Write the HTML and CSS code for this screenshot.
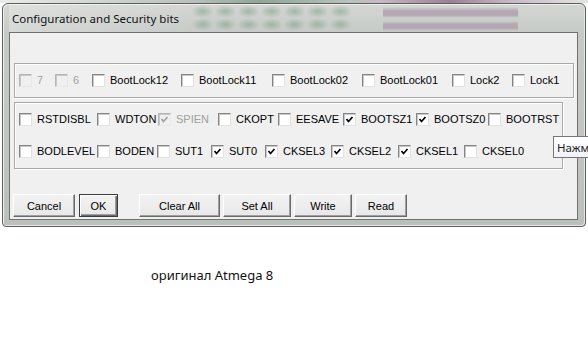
FILE: index.html
```html
<!DOCTYPE html>
<html lang="ru">
<head>
    <meta charset="UTF-8">
    <title>Configuration and Security bits</title>
    <link rel="stylesheet" href="styles.css">
</head>
<body>
    <div class="backdrop"></div>
    <div class="window">
        <div class="titlebar">
            <span class="title">Configuration and Security bits</span>
            <span class="glass-icons"></span>
            <span class="glass-band"></span>
        </div>
        <div class="client">
            <div class="group group-lock">
                <div class="bits-row row-lock">
                    <label class="bit disabled"><span class="box"></span>7</label>
                    <label class="bit disabled"><span class="box"></span>6</label>
                    <label class="bit"><span class="box"></span>BootLock12</label>
                    <label class="bit"><span class="box"></span>BootLock11</label>
                    <label class="bit"><span class="box"></span>BootLock02</label>
                    <label class="bit"><span class="box"></span>BootLock01</label>
                    <label class="bit"><span class="box"></span>Lock2</label>
                    <label class="bit"><span class="box"></span>Lock1</label>
                </div>
            </div>
            <div class="group group-fuse">
                <div class="bits-row row-high">
                    <label class="bit"><span class="box"></span>RSTDISBL</label>
                    <label class="bit"><span class="box"></span>WDTON</label>
                    <label class="bit disabled"><span class="box checked"><svg viewBox="0 0 11 11"><polyline points="2.5,5 4.5,7.5 8.5,3"/></svg></span>SPIEN</label>
                    <label class="bit"><span class="box"></span>CKOPT</label>
                    <label class="bit"><span class="box"></span>EESAVE</label>
                    <label class="bit"><span class="box checked"><svg viewBox="0 0 11 11"><polyline points="2.5,5 4.5,7.5 8.5,3"/></svg></span>BOOTSZ1</label>
                    <label class="bit"><span class="box checked"><svg viewBox="0 0 11 11"><polyline points="2.5,5 4.5,7.5 8.5,3"/></svg></span>BOOTSZ0</label>
                    <label class="bit"><span class="box"></span>BOOTRST</label>
                </div>
                <div class="bits-row row-low">
                    <label class="bit"><span class="box"></span>BODLEVEL</label>
                    <label class="bit"><span class="box"></span>BODEN</label>
                    <label class="bit"><span class="box"></span>SUT1</label>
                    <label class="bit"><span class="box checked"><svg viewBox="0 0 11 11"><polyline points="2.5,5 4.5,7.5 8.5,3"/></svg></span>SUT0</label>
                    <label class="bit"><span class="box checked"><svg viewBox="0 0 11 11"><polyline points="2.5,5 4.5,7.5 8.5,3"/></svg></span>CKSEL3</label>
                    <label class="bit"><span class="box checked"><svg viewBox="0 0 11 11"><polyline points="2.5,5 4.5,7.5 8.5,3"/></svg></span>CKSEL2</label>
                    <label class="bit"><span class="box checked"><svg viewBox="0 0 11 11"><polyline points="2.5,5 4.5,7.5 8.5,3"/></svg></span>CKSEL1</label>
                    <label class="bit"><span class="box"></span>CKSEL0</label>
                </div>
            </div>
            <div class="buttons">
                <button class="btn btn-cancel">Cancel</button>
                <button class="btn btn-ok">OK</button>
                <button class="btn btn-clear">Clear All</button>
                <button class="btn btn-set">Set All</button>
                <button class="btn btn-write">Write</button>
                <button class="btn btn-read">Read</button>
            </div>
        </div>
    </div>
    <div class="tooltip">Нажм</div>
    <p class="caption">оригинал Atmega 8</p>
</body>
</html>
```

FILE: styles.css
```css
body {
    margin: 0;
    background-color: #ffffff;
    font-family: "Liberation Sans", Arial, sans-serif;
    font-size: 11px;
    width: 588px;
    height: 357px;
    overflow: hidden;
    position: relative;
}
.backdrop {
    height: 3px;
    background: linear-gradient(to right, #e9ebe9 0, #b9c2bb 190px, #93a597 260px, #b9c2bb 350px, #c9b8c6 380px, #9d7f97 450px, #c9b8c6 510px, #e4e4e4 588px);
}
.window {
    margin-left: 2px;
    width: 584px;
    height: 224px;
    box-sizing: border-box;
    border: 1px solid #5c5f5c;
    border-radius: 6px 6px 4px 4px;
    padding: 0 7px 6px 6px;
    background: linear-gradient(to bottom, #d3d6d3 0, #c6cac7 30px, #c2c6c3 120px, #bcc0bd 100%);
    box-shadow: inset 1px 1px 0 #eef0ee, inset -1px -1px 0 #e3e6e3;
}
.titlebar {
    height: 28px;
    display: flex;
    align-items: center;
    background: linear-gradient(to right, rgba(255, 255, 255, 0.25), rgba(255, 255, 255, 0) 200px);
}
.title {
    font-family: "Noto Sans", sans-serif;
    font-size: 11.5px;
    color: #111;
    margin-left: 3px;
    white-space: nowrap;
}
.glass-icons {
    margin-left: 12px;
    width: 162px;
    height: 26px;
    background: radial-gradient(closest-side, rgba(95, 140, 105, 0.4), rgba(95, 140, 105, 0.12) 70%, rgba(95, 140, 105, 0)) 0 0 / 23px 13px repeat;
}
.glass-band {
    margin-left: 30px;
    width: 135px;
    height: 26px;
    background: linear-gradient(to bottom, rgba(140, 100, 135, 0) 2px, rgba(140, 100, 135, 0.4) 6px, rgba(140, 100, 135, 0.4) 10px, rgba(140, 100, 135, 0) 13px, rgba(140, 100, 135, 0) 16px, rgba(140, 100, 135, 0.35) 19px, rgba(140, 100, 135, 0.35) 23px, rgba(140, 100, 135, 0) 26px);
}
.client {
    height: 188px;
    box-sizing: border-box;
    border: 1px solid #707070;
    background-color: #f0f0f0;
    padding-top: 30px;
}
.group {
    margin-left: 4px;
    box-sizing: border-box;
    border: 1px solid #a9a9a9;
    box-shadow: 1px 1px 0 #ffffff, inset 1px 1px 0 #ffffff;
    padding: 10px 0 0 4px;
}
.group-lock {
    width: 560px;
    height: 35px;
}
.group-fuse {
    margin-top: 4px;
    width: 549px;
    height: 67px;
    display: flex;
    flex-direction: column;
    gap: 19px;
}
.bits-row {
    display: grid;
    height: 13px;
    align-items: center;
}
.row-lock {
    grid-template-columns: 36px 37px 89px 91px 90px 90px 60px auto;
}
.row-high {
    grid-template-columns: 78px 61px 60px 60px 65px 73px 72px auto;
}
.row-low {
    grid-template-columns: 78px 60px 54px 54px 66px 67px 66px auto;
}
.bit {
    display: flex;
    align-items: center;
    gap: 5px;
    white-space: nowrap;
    color: #000;
    height: 13px;
    line-height: 13px;
}
.bit.disabled {
    color: #a0a0a0;
}
.box {
    flex: none;
    width: 13px;
    height: 13px;
    box-sizing: border-box;
    border: 1px solid;
    border-color: #858585 #e2e2e2 #e2e2e2 #858585;
    box-shadow: inset 1px 1px 0 #c8c8c8;
    background-color: #ffffff;
}
.disabled .box {
    background-color: #f0f0f0;
    border-color: #b5b5b5 #e8e8e8 #e8e8e8 #b5b5b5;
}
.box svg {
    display: block;
    width: 11px;
    height: 11px;
}
.box polyline {
    fill: none;
    stroke: #000;
    stroke-width: 1.7;
}
.disabled .box polyline {
    stroke: #a0a0a0;
}
.buttons {
    display: flex;
    margin: 25px 0 0 3px;
}
.btn {
    height: 23px;
    box-sizing: border-box;
    font-family: "Liberation Sans", Arial, sans-serif;
    font-size: 11px;
    color: #000;
    background: linear-gradient(to bottom, #f2f2f2, #e8e8e8);
    border: 1px solid;
    border-color: #ffffff #6a6a6a #6a6a6a #ffffff;
    box-shadow: inset -1px -1px 0 #a0a0a0;
    padding: 0;
}
.btn-cancel { width: 62px; }
.btn-ok {
    width: 39px;
    margin-left: 4px;
    border-color: #3c3c3c;
    box-shadow: inset 1px 1px 0 #ffffff, inset -1px -1px 0 #6a6a6a, inset -2px -2px 0 #a0a0a0;
}
.btn-clear { width: 81px; margin-left: 21px; }
.btn-set { width: 68px; margin-left: 3px; }
.btn-write { width: 58px; margin-left: 3px; }
.btn-read { width: 52px; margin-left: 3px; }
.tooltip {
    position: absolute;
    left: 553px;
    top: 136px;
    height: 22px;
    box-sizing: border-box;
    border: 1px solid #767676;
    background: linear-gradient(to bottom, #ffffff, #f1f2f7);
    padding: 3px 12px 0 3px;
    font-family: "Noto Sans", sans-serif;
    font-size: 11.5px;
    line-height: 15px;
    white-space: nowrap;
    color: #1e1e1e;
}
.caption {
    margin: 39px 0 0 151px;
    font-family: "Noto Sans", sans-serif;
    font-size: 13px;
    line-height: 18px;
    color: #111;
}
```
